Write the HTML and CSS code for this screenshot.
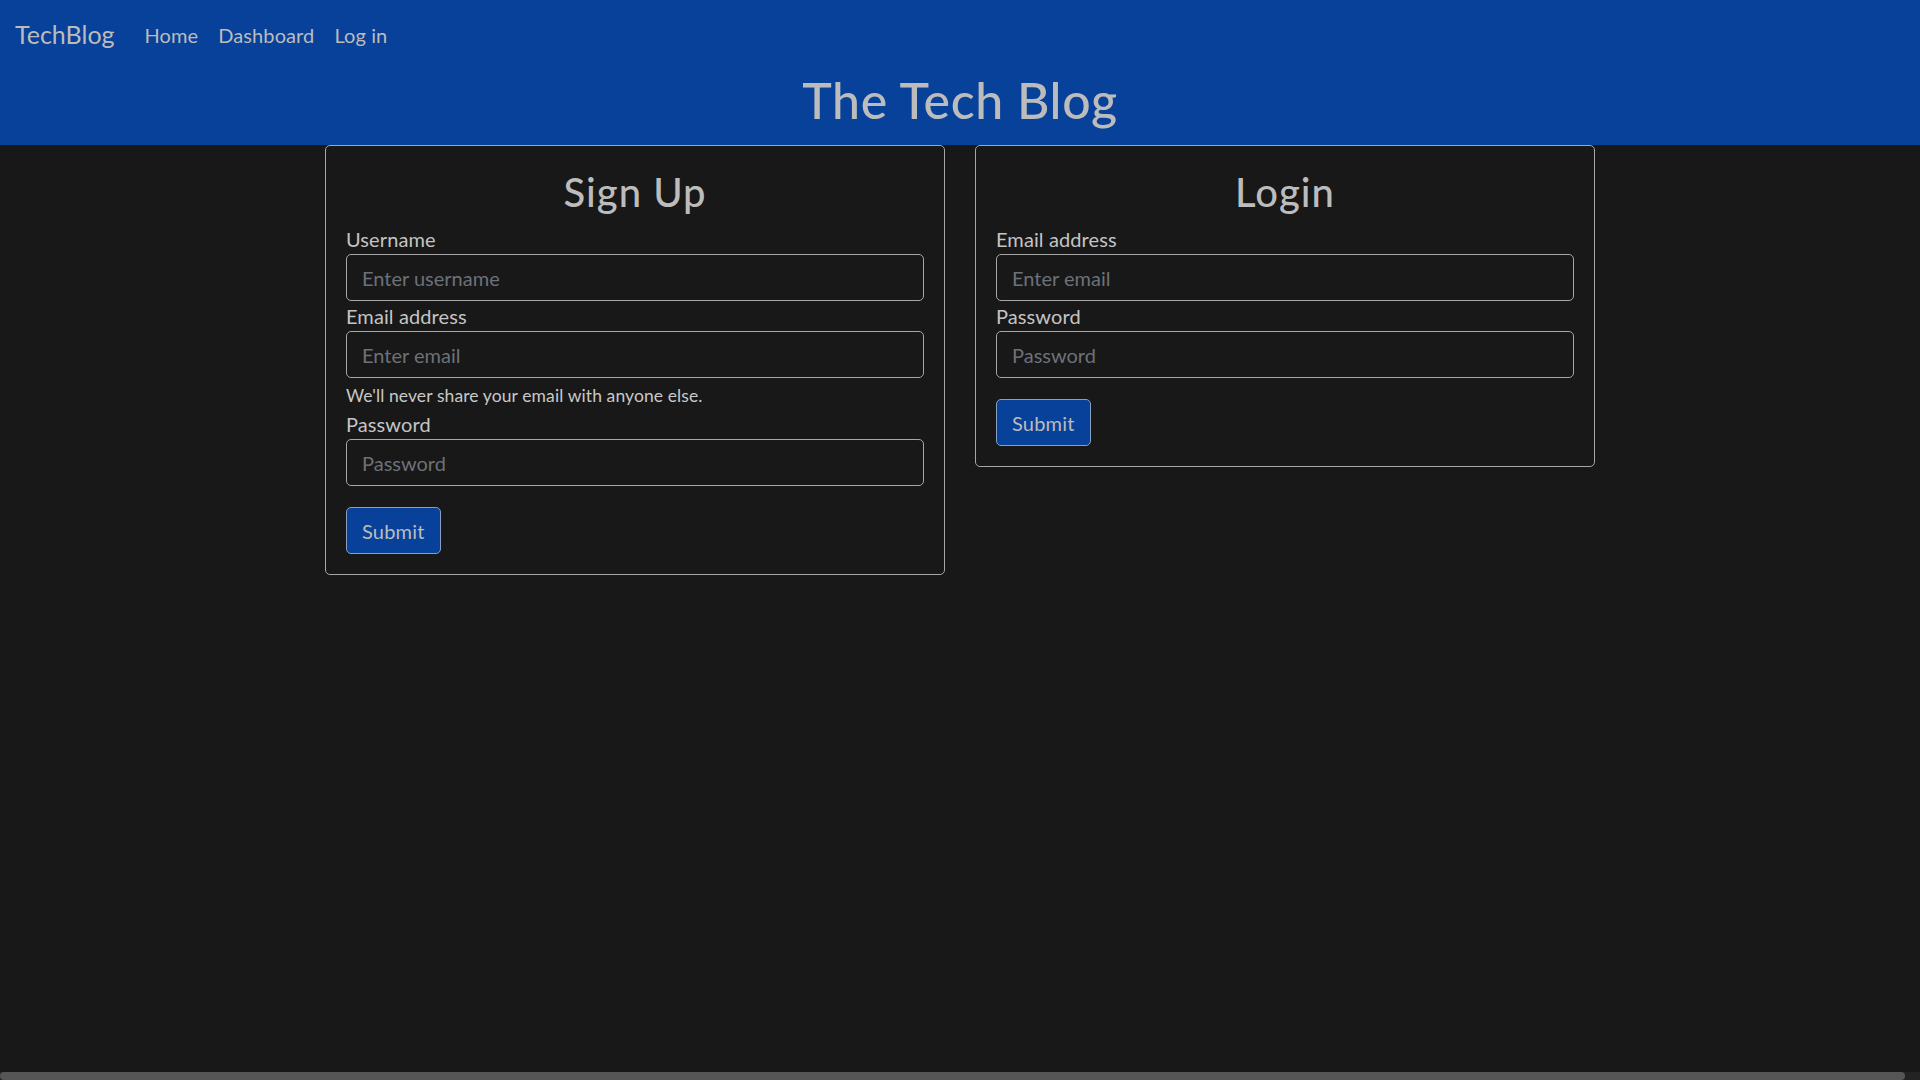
FILE: index.html
```html
<!DOCTYPE html>
<html lang="en">
<head>
<meta charset="utf-8">
<title>The Tech Blog</title>
<link rel="stylesheet" href="styles.css">
</head>
<body>
<header class="site-header">
  <nav class="navbar">
    <a class="brand" href="#">TechBlog</a>
    <ul class="nav-links">
      <li><a href="#">Home</a></li>
      <li><a href="#">Dashboard</a></li>
      <li><a href="#">Log in</a></li>
    </ul>
  </nav>
  <h1 class="site-title">The Tech Blog</h1>
</header>
<main class="cards">
  <section class="card">
    <h2 class="card-title">Sign Up</h2>
    <form class="form">
      <label class="label" for="su-user">Username</label>
      <input class="input" id="su-user" type="text" placeholder="Enter username">
      <label class="label" for="su-email">Email address</label>
      <input class="input" id="su-email" type="email" placeholder="Enter email">
      <small class="help">We'll never share your email with anyone else.</small>
      <label class="label" for="su-pass">Password</label>
      <input class="input" id="su-pass" type="password" placeholder="Password">
      <button class="btn" type="button">Submit</button>
    </form>
  </section>
  <section class="card">
    <h2 class="card-title">Login</h2>
    <form class="form">
      <label class="label" for="li-email">Email address</label>
      <input class="input" id="li-email" type="email" placeholder="Enter email">
      <label class="label" for="li-pass">Password</label>
      <input class="input" id="li-pass" type="password" placeholder="Password">
      <button class="btn" type="button">Submit</button>
    </form>
  </section>
</main>
<div class="hscroll"><div class="hscroll-thumb"></div></div>
</body>
</html>
```
FILE: styles.css
```css
* { box-sizing: border-box; }
html, body { height: 100%; }
body {
  margin: 0;
  background: #181818;
  color: #bcbcbc;
  font-family: Lato, "Open Sans", sans-serif;
  font-size: 20px;
  line-height: 1.5;
  letter-spacing: 0.005em;
  overflow: hidden;
}
a { color: inherit; text-decoration: none; }

.site-header {
  background: #08419a;
  padding-bottom: 15px;
}
.navbar {
  display: flex;
  align-items: center;
  padding: 10px 15px;
}
.brand {
  font-size: 25px;
  line-height: 37.5px;
  padding: 6.25px 0;
  margin-right: 20px;
  letter-spacing: 0;
  color: #bcbcbc;
}
.nav-links {
  display: flex;
  list-style: none;
  margin: 0;
  padding: 0;
}
.nav-links a {
  display: block;
  padding: 10px 10px;
  line-height: 30px;
  color: #bcbcbc;
}
.site-title {
  margin: 0;
  padding-top: 1px;
  text-align: center;
  font-size: 50px;
  font-weight: 500;
  line-height: 59px;
  letter-spacing: 0.012em;
  color: #bcbcbc;
}

.cards {
  display: flex;
  justify-content: center;
  align-items: flex-start;
  gap: 30px;
}
.card {
  width: 620px;
  border: 1px solid #a6a6a6;
  border-radius: 5px;
  padding: 20px;
}
.card-title {
  margin: 0 0 8px;
  padding-top: 2px;
  text-align: center;
  font-size: 40px;
  font-weight: 500;
  line-height: 48px;
  letter-spacing: 0.025em;
  color: #bcbcbc;
}
.form {
  display: flex;
  flex-direction: column;
  align-items: flex-start;
}
.label {
  display: block;
  line-height: 30px;
  color: #c4c4c4;
}
.input {
  display: block;
  width: 100%;
  height: 47px;
  padding: 7.5px 15px;
  font: inherit;
  color: #bcbcbc;
  background: #181818;
  border: 1px solid #a6a6a6;
  border-radius: 5px;
  outline: none;
}
.input::placeholder { color: #6c7178; }
.help {
  display: block;
  margin-top: 5px;
  font-size: 17.5px;
  line-height: 26.25px;
  color: #c8c8c8;
}
.btn {
  margin-top: 21px;
  height: 47px;
  padding: 7.5px 15px;
  font: inherit;
  letter-spacing: 0.01em;
  color: #bcbcbc;
  background: #08419a;
  border: 1px solid #8a9ec2;
  border-radius: 5px;
}

.hscroll {
  position: fixed;
  left: 0;
  right: 0;
  bottom: 0;
  height: 8px;
  background: #232323;
}
.hscroll-thumb {
  width: 1905px;
  height: 8px;
  background: #565656;
  border-radius: 4px;
}
```
